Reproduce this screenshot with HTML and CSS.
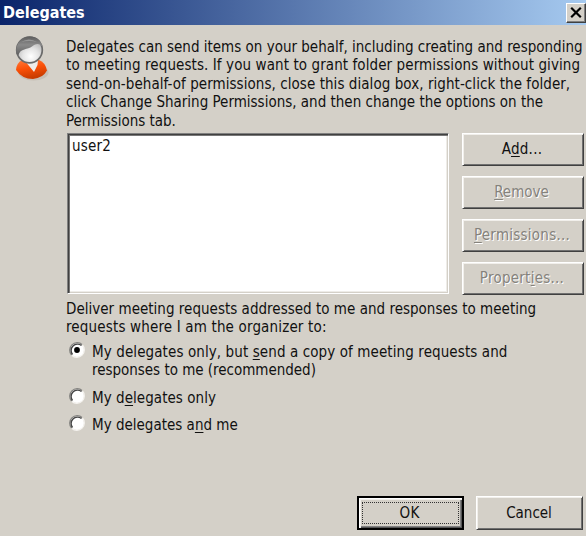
FILE: index.html
```
<!DOCTYPE html>
<html lang="en">
<head>
<meta charset="utf-8">
<title>Delegates</title>
<link rel="stylesheet" href="styles.css">
</head>
<body>
<main class="dialog">
  <header class="titlebar">
    <h1>Delegates</h1>
    <button class="close" aria-label="Close"><svg width="12" height="11" viewBox="0 0 12 11"><path d="M1.2 .8 10.8 10.2M10.8 .8 1.2 10.2" stroke="#000" stroke-width="2.2"/></svg></button>
  </header>
  <section class="intro">
    <svg class="person" width="36" height="46" viewBox="0 0 36 46">
      <defs>
        <radialGradient id="face" cx=".55" cy=".75" r=".7"><stop offset="0" stop-color="#fff"/><stop offset=".45" stop-color="#e4e4e4"/><stop offset="1" stop-color="#aaa"/></radialGradient>
        <linearGradient id="hair" x2="0" y2="1"><stop offset="0" stop-color="#5c5c5c"/><stop offset=".45" stop-color="#8a8a8a"/><stop offset="1" stop-color="#606060"/></linearGradient>
        <linearGradient id="coat" x2=".3" y2="1"><stop offset="0" stop-color="#ff7b3c"/><stop offset=".5" stop-color="#fa5008"/><stop offset="1" stop-color="#c93c00"/></linearGradient>
      </defs>
      <ellipse cx="19.500" cy="36.500" rx="15" ry="8" fill="#bdb4aa" opacity=".6"/>
      <path d="M8 24Q2.500 27 2 34Q8 43 19 43Q29 42 33 34.500Q31 26 25 24Z" fill="url(#coat)"/>
      <path d="M11 25Q17 28 24 24L23.500 29L20 36Z" fill="#eeecea"/>
      <circle cx="15.500" cy="14" r="12.800" fill="url(#face)" stroke="#6a6a6a" stroke-width="1.700"/>
      <path d="M2.500 18C1 7 8 .5 16 .5C23 .5 27 4 28.500 11C25 6 21 8 18 10.500C14 13.500 6 12.500 4.500 19Z" fill="url(#hair)"/>
      <path d="M7 6Q15 1 23 6Q15 4 7 6Z" fill="#aeaeae" opacity=".6"/>
    </svg>
    <p class="copy"><span class="a1">Delegates can send items on your behalf, including creating and responding</span><span class="a2">to meeting requests. If you want to grant folder permissions without giving</span><span class="a3">send-on-behalf-of permissions, close this dialog box, right-click the folder,</span><span class="a4">click Change Sharing Permissions, and then change the options on the</span><span class="a5">Permissions tab.</span></p>
  </section>
  <section class="people">
    <div class="list"><span class="user">user2</span></div>
    <div class="actions">
      <button class="btn"><span>A<u>d</u>d...</span></button>
      <button class="btn off"><span class="remove"><u>R</u>emove</span></button>
      <button class="btn off"><span><u>P</u>ermissions...</span></button>
      <button class="btn off"><span>Propert<u>i</u>es...</span></button>
    </div>
  </section>
  <section class="delivery">
    <p class="copy"><span class="b1">Deliver meeting requests addressed to me and responses to meeting</span><span class="b2">requests where I am the organizer to:</span></p>
    <div class="option first"><svg class="radio" width="18" height="18" viewBox="0 0 18 18"><circle cx="9" cy="9" r="7" fill="#fff"/><path d="M3.700 14.300A7.500 7.500 0 0 1 14.300 3.700" fill="none" stroke="#858481" stroke-width="1.300"/><path d="M4.500 13.500A6.400 6.400 0 0 1 13.500 4.500" fill="none" stroke="#444" stroke-width="1.400"/><path d="M14.300 3.700A7.500 7.500 0 0 1 3.700 14.300" fill="none" stroke="#f5f3ef" stroke-width="1.200"/><circle cx="9" cy="9" r="2.900"/></svg><p class="copy"><span class="c1">My delegates only, but <u>s</u>end a copy of meeting requests and</span><span class="c2">responses to me (recommended)</span></p></div>
    <div class="option second"><svg class="radio" width="18" height="18" viewBox="0 0 18 18"><circle cx="9" cy="9" r="7" fill="#fff"/><path d="M3.700 14.300A7.500 7.500 0 0 1 14.300 3.700" fill="none" stroke="#858481" stroke-width="1.300"/><path d="M4.500 13.500A6.400 6.400 0 0 1 13.500 4.500" fill="none" stroke="#444" stroke-width="1.400"/><path d="M14.300 3.700A7.500 7.500 0 0 1 3.700 14.300" fill="none" stroke="#f5f3ef" stroke-width="1.200"/></svg><p class="copy"><span class="c3">My d<u>e</u>legates only</span></p></div>
    <div class="option third"><svg class="radio" width="18" height="18" viewBox="0 0 18 18"><circle cx="9" cy="9" r="7" fill="#fff"/><path d="M3.700 14.300A7.500 7.500 0 0 1 14.300 3.700" fill="none" stroke="#858481" stroke-width="1.300"/><path d="M4.500 13.500A6.400 6.400 0 0 1 13.500 4.500" fill="none" stroke="#444" stroke-width="1.400"/><path d="M14.300 3.700A7.500 7.500 0 0 1 3.700 14.300" fill="none" stroke="#f5f3ef" stroke-width="1.200"/></svg><p class="copy"><span class="c4">My delegates a<u>n</u>d me</span></p></div>
  </section>
  <footer class="footer">
    <button class="btn ok"><span>OK</span></button>
    <button class="btn cancel"><span>Cancel</span></button>
  </footer>
</main>
</body>
</html>
```
FILE: styles.css
```
* { box-sizing: border-box; }
body { margin: 0; overflow: hidden; }
.dialog {
  width: 586px; height: 536px; background: #d4d0c8; color: #111;
  display: flex; flex-direction: column;
  font: 15px/18.4px "DejaVu Sans Condensed", "DejaVu Sans", sans-serif;
}
h1, p { margin: 0; }
u { text-decoration-thickness: 1px; text-underline-offset: 2px; }
.titlebar {
  height: 25px; flex: none; display: flex; align-items: center; justify-content: space-between;
  padding: 0 0 0 3px; background: linear-gradient(90deg, #0a246a, #a6caf0);
}
h1 { color: #fff; font-size: 16px; line-height: 24px; letter-spacing: 0; }
.close {
  width: 20px; height: 20px; padding: 0; display: flex; align-items: center; justify-content: center;
  border: 1px solid; border-color: #fff #404040 #404040 #fff; background: #d4d0c8;
  box-shadow: inset -1px -1px #808080;
}
.intro { height: 108px; flex: none; display: flex; padding: 13px 0 0 66px; position: relative; }
.person { position: absolute; left: 14px; top: 11px; }
.copy span { display: block; width: max-content; white-space: nowrap; }
.copy .a2 { letter-spacing: .09px; }
.copy .a3 { letter-spacing: .06px; }
.copy .a5 { letter-spacing: -.05px; }
.copy .b1 { letter-spacing: .02px; }
.copy .b2 { letter-spacing: .16px; }
.copy .c1 { letter-spacing: .1px; }
.copy .c2 { letter-spacing: -.02px; }
.copy .c3 { letter-spacing: .05px; }
.people { display: flex; gap: 13px; padding-left: 67px; height: 162px; flex: none; }
.list {
  width: 382px; height: 161px; padding: 3px 3px; background: #fff;
  border: 1px solid; border-color: #808080 #fff #fff #808080;
  box-shadow: inset 1px 1px #404040, inset 2px 2px #777, inset -1px -1px #d4d0c8, inset -2px -2px #eeece8;
}
.user { letter-spacing: .2px; margin-left: 1px; }
.actions { width: 122px; display: flex; flex-direction: column; justify-content: space-between; }
.btn {
  height: 33px; padding: 0; font: inherit; color: #111; background: #d4d0c8;
  border: 1px solid; border-color: #fff #404040 #404040 #fff;
  box-shadow: inset 1px 1px #f1efeb, inset -1px -1px #707070;
}
.btn span { letter-spacing: .25px; margin-right: 2px; }
.btn .remove { letter-spacing: 0; margin-right: 3px; }
.btn.cancel span { letter-spacing: 0; margin-right: 1px; }
.off { color: #85827c; text-shadow: 1px 1px #fff; }
.delivery { padding: 5px 0 0 66px; }
.option { display: flex; gap: 6px; padding-left: 2px; }
.option .radio { flex: none; margin-top: -2px; }
.first { margin-top: 6px; }
.second { margin-top: 9px; }
.third { margin-top: 9px; }
.footer { margin-top: auto; padding: 0 3px 6px 0; display: flex; gap: 12px; justify-content: flex-end; }
.footer .btn { width: 107px; height: 34px; }
.footer .ok {
  border: 2px solid #000; box-shadow: inset 1px 1px #fff, inset 2px 2px #f1efeb, inset -1px -1px #555, inset -2px -2px #808080;
  padding: 4px 3px; display: flex;
}
.ok span { flex: 1; height: 100%; margin-right: 0; border: 1px dotted #333; display: flex; align-items: center; justify-content: center; padding-right: 2px; }
```
